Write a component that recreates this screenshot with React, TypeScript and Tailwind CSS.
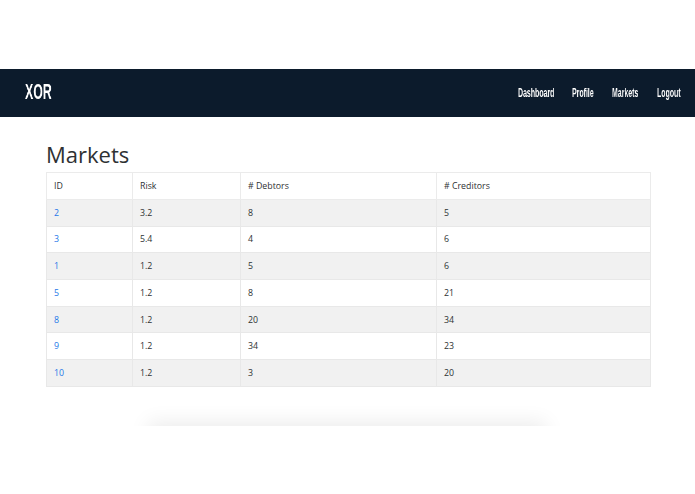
import React from 'react';

const rows = [
    { id: '2', risk: '3.2', debtors: '8', creditors: '5' },
    { id: '3', risk: '5.4', debtors: '4', creditors: '6' },
    { id: '1', risk: '1.2', debtors: '5', creditors: '6' },
    { id: '5', risk: '1.2', debtors: '8', creditors: '21' },
    { id: '8', risk: '1.2', debtors: '20', creditors: '34' },
    { id: '9', risk: '1.2', debtors: '34', creditors: '23' },
    { id: '10', risk: '1.2', debtors: '3', creditors: '20' },
];

const App: React.FC = () => {
    return (
        <div className="w-[695px] h-[494px] overflow-hidden bg-white pt-[69px] font-['Open_Sans',sans-serif] text-[#2e3133]">
            <nav className="h-[48px] bg-[#0c1b2c] flex items-center justify-between pl-[25px] pr-[15px] text-white font-['Liberation_Sans',sans-serif] font-bold">
                <div className="w-[27px]">
                    <span className="inline-block origin-left scale-x-[0.56] will-change-transform text-[22px] leading-none">XOR</span>
                </div>
                {/* no condensed font here, so the nav text is squeezed to the reference widths */}
                <ul className="flex gap-[18px] text-[12px]">
                    <li className="w-[36px]"><span className="inline-block origin-left scale-x-[0.58] will-change-transform">Dashboard</span></li>
                    <li className="w-[22px]"><span className="inline-block origin-left scale-x-[0.58] will-change-transform">Profile</span></li>
                    <li className="w-[27px]"><span className="inline-block origin-left scale-x-[0.58] will-change-transform">Markets</span></li>
                    <li className="w-[23px]"><span className="inline-block origin-left scale-x-[0.58] will-change-transform">Logout</span></li>
                </ul>
            </nav>

            <div className="px-[46px] pt-[21px]">
                <h1 className="text-[22px] leading-[33px] h-[34px] font-normal text-[#2e3133]">Markets</h1>
                <table className="table-fixed border-collapse w-[604px] text-[8.8px]">
                    <colgroup>
                        <col className="w-[86px]" />
                        <col className="w-[108px]" />
                        <col className="w-[196px]" />
                        <col className="w-[214px]" />
                    </colgroup>
                    <thead>
                        <tr className="h-[27px]">
                            <th className="border border-[#ebebeb] px-[7px] pt-[1px] text-left font-normal">ID</th>
                            <th className="border border-[#ebebeb] px-[7px] pt-[1px] text-left font-normal">Risk</th>
                            <th className="border border-[#ebebeb] px-[7px] pt-[1px] text-left font-normal"># Debtors</th>
                            <th className="border border-[#ebebeb] px-[7px] pt-[1px] text-left font-normal"># Creditors</th>
                        </tr>
                    </thead>
                    <tbody>
                        {rows.map((row, i) => (
                            <tr key={row.id} className={i % 2 === 0 ? 'h-[26.7px] bg-[#f1f1f1]' : 'h-[26.7px] bg-white'}>
                                <td className="border border-[#e8e8e8] px-[7px] pt-[1px] text-[#1f78e8]">{row.id}</td>
                                <td className="border border-[#e8e8e8] px-[7px] pt-[1px]">{row.risk}</td>
                                <td className="border border-[#e8e8e8] px-[7px] pt-[1px]">{row.debtors}</td>
                                <td className="border border-[#e8e8e8] px-[7px] pt-[1px]">{row.creditors}</td>
                            </tr>
                        ))}
                    </tbody>
                </table>
            </div>

            {/* shadow of the next section, cut off at its top edge */}
            <div className="mt-[16px] h-[23px] overflow-hidden flex justify-center">
                <div className="w-[388px] h-[20px] mt-[24px] ml-[-2px] shadow-[0_0_20px_5px_rgba(0,0,0,0.08)]" />
            </div>
        </div>
    );
};

export default App;
